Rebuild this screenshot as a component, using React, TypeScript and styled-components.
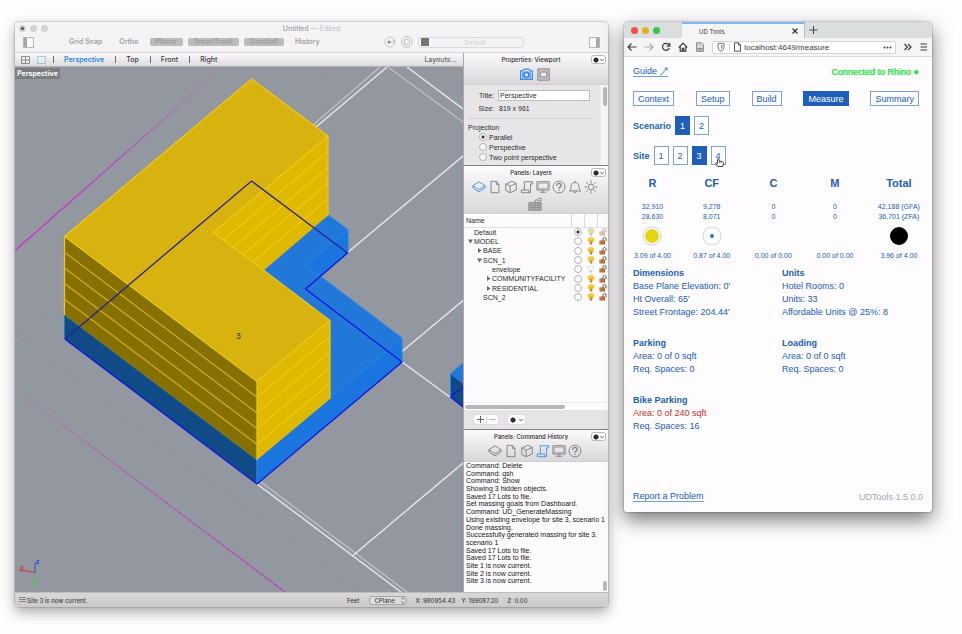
import React from "react";
import styled, { createGlobalStyle, css } from "styled-components";

const sans = '"Liberation Sans", Arial, sans-serif';
const ui = 'Inter, "Liberation Sans", sans-serif';
const blue = "#2160b4";

const GlobalStyle = createGlobalStyle`
  *, *::before, *::after { box-sizing: border-box; }
  body { margin: 0; background: #fefcfe; font-family: ${sans}; }
  button, input, select { font: inherit; color: inherit; margin: 0; padding: 0; }
  table { border-collapse: collapse; border-spacing: 0; }
  ul { list-style: none; margin: 0; padding: 0; }
  h2, h3, p { margin: 0; font-weight: inherit; font-size: inherit; }
  svg { display: block; flex: none; }
`;

const Desktop = styled.div`
  display: grid;
  grid-template-columns: minmax(0, 593fr) minmax(0, 308fr);
  gap: 16px;
  min-height: 100vh;
  padding: 22px 30px 27px 15px;
`;

/* ---------- modelling window ---------- */

const ModelWindow = styled.section`
  display: flex;
  flex-direction: column;
  min-width: 0;
  border-radius: 4px;
  overflow: hidden;
  background: #f5f3f6;
  box-shadow: 0 0 1px 1px rgba(0, 0, 0, 0.14), 0 5px 13px rgba(0, 0, 0, 0.34);
  font-size: 7px;
  color: #2b2b2b;
`;

const ModelHeader = styled.header`
  height: 31px;
  border-bottom: 1px solid #d6d4d7;
  color: #aeacb0;
  font-family: ${ui};
`;

const TitleRow = styled.div`
  display: grid;
  grid-template-columns: 1fr auto 1fr;
  align-items: center;
  height: 12px;
  padding: 0 4px;
`;

const Title = styled.h2`
  color: #949296;
  span { color: #c0bec2; }
`;

const Dots = styled.div`
  display: flex;
  gap: 4px;
`;

const WindowDot = styled.button<{ $color: string; $marked?: boolean }>`
  width: 7px;
  height: 7px;
  border: 0;
  border-radius: 50%;
  background: ${(p) =>
    p.$marked ? "radial-gradient(circle, #555 0 1px, #cfcdd0 2px)" : p.$color};
`;

const Toolbar = styled.div`
  display: flex;
  align-items: center;
  height: 16px;
  padding: 0 8px;
`;

const SnapTools = styled.div`
  display: flex;
  align-items: center;
  margin-left: 36px;
`;

const Tool = styled.button<{ $on?: boolean; $gap?: number }>`
  height: 8px;
  line-height: 8px;
  border: 0;
  border-radius: 2px;
  padding: 0 6px;
  margin-left: ${(p) => p.$gap ?? 5}px;
  font-weight: 600;
  background: ${(p) => (p.$on ? "#bdbbbe" : "transparent")};
  color: ${(p) => (p.$on ? "#9f9da0" : "#a19fa2")};
`;

const RoundTools = styled.div`
  display: flex;
  align-items: center;
  gap: 5px;
  margin-left: auto;
`;

const IconButton = styled.button`
  display: grid;
  place-items: center;
  border: 0;
  background: none;
  color: inherit;
`;

const LayerPicker = styled.button`
  display: grid;
  grid-template-columns: 8px 1fr;
  align-items: center;
  width: 106px;
  height: 11px;
  margin: 0 65px 0 5px;
  padding: 0 2px;
  border: 1px solid #dbd9dc;
  border-radius: 3px;
  background: #f5f3f6;
  color: #d0ced1;
  font-size: 6px;
`;

const Swatch = styled.span`
  width: 8px;
  height: 8px;
  background: #747475;
`;

const ModelBody = styled.div`
  flex: 1;
  display: grid;
  grid-template-columns: minmax(0, 1fr) 145px;
  min-height: 0;
`;

const ViewArea = styled.div`
  display: flex;
  flex-direction: column;
  min-width: 0;
`;

const ViewTabs = styled.nav`
  display: flex;
  align-items: center;
  height: 14px;
  padding: 0 6px 0 6px;
  gap: 7px;
  background: linear-gradient(#fbf9fb, #dddbde);
  border-bottom: 1px solid #b3b1b4;
  font-family: ${ui};
  font-weight: 500;
`;

const ViewTab = styled.button<{ $active?: boolean }>`
  border: 0;
  border-left: 1px solid #6d6c6e;
  height: 7px;
  line-height: 7px;
  padding: 0 4px 0 10px;
  background: none;
  font-weight: ${(p) => (p.$active ? 600 : 500)};
  color: ${(p) => (p.$active ? "#2d86e8" : "#3f3e40")};
`;

const LayoutsButton = styled.button`
  margin-left: auto;
  border: 0;
  background: none;
  color: #68676a;
`;

const Viewport = styled.div`
  position: relative;
  flex: 1;
  min-height: 0;
  background: #9297a0;
`;

const Scene = styled.svg`
  position: absolute;
  inset: 0;
  width: 100%;
  height: 100%;
`;

const ViewLabel = styled.div`
  position: absolute;
  left: 0;
  top: 1px;
  height: 11px;
  line-height: 11px;
  padding: 0 2px;
  background: #7b7d80;
  color: #fff;
  font-family: ${ui};
  font-size: 7px;
  font-weight: 700;
`;

const Sidebar = styled.aside`
  display: flex;
  flex-direction: column;
  min-width: 0;
  border-left: 1px solid #aaa8ab;
  background: #fdfbfd;
`;

const Panel = styled.section<{ $grow?: boolean; $height?: number }>`
  display: flex;
  flex-direction: column;
  ${(p) => (p.$grow ? css`flex: 1;` : css`height: ${p.$height}px; flex: none;`)}
  & + & { border-top: 1px solid #828083; }
`;

const PanelHead = styled.header<{ $height: number }>`
  position: relative;
  height: ${(p) => p.$height}px;
  flex: none;
  background: linear-gradient(#fcfafc, #d9d7da);
  border-bottom: 1px solid #d0ced1;
`;

const PanelTitle = styled.h3`
  height: 13px;
  line-height: 13px;
  padding-right: 10px;
  text-align: center;
  font-family: ${ui};
  font-size: 6px;
  font-weight: 500;
`;

const PanelMenu = styled.button`
  position: absolute;
  top: 2px;
  right: 2px;
  display: flex;
  align-items: center;
  justify-content: center;
  gap: 1px;
  width: 15px;
  height: 9px;
  border: 1px solid #bab8bb;
  border-radius: 3px;
  background: #fff;
`;

const IconRow = styled.div<{ $gap?: number; $top?: number }>`
  display: flex;
  flex-wrap: wrap;
  justify-content: center;
  gap: 3px ${(p) => p.$gap ?? 2}px;
  color: #7b797c;
  padding: ${(p) => p.$top ?? 1}px 6px 0 3px;
`;

const PropertyForm = styled.form`
  flex: 1;
  display: grid;
  grid-template-columns: minmax(0, 1fr) 8px;
  background: #e7e5e8;
`;

const Fields = styled.div`
  padding: 4px 0 0 4px;
`;

const Field = styled.div`
  display: grid;
  grid-template-columns: 26px 92px;
  column-gap: 4px;
  align-items: center;
  height: 13px;
  line-height: 9px;
  label, span { text-align: right; }
  output { padding-left: 1px; }
`;

const TextInput = styled.input`
  width: 100%;
  height: 11px;
  border: 1px solid #bfbdc0;
  background: #fff;
  padding: 0 1px;
`;

const Projection = styled.fieldset`
  margin: 3px 8px 0 0;
  padding: 4px 0 0;
  border: 0;
  border-top: 1px solid #d5d3d6;
  legend { float: left; width: 100%; height: 9px; line-height: 9px; padding: 0; }
`;

const Choice = styled.label`
  clear: both;
  display: flex;
  align-items: center;
  gap: 2px;
  height: 10px;
  padding-left: 11px;
`;

const Radio = styled.input`
  appearance: none;
  display: block;
  width: 8px;
  height: 8px;
  border: 1px solid #b3b1b4;
  border-radius: 50%;
  background: #fff;
  &:checked { background: radial-gradient(circle, #333 0 1px, #fff 2px); }
`;

const Track = styled.div`
  padding: 2px;
  border-left: 1px solid #eceaed;
  background: #f8f6f9;
`;

const Thumb = styled.div<{ $h: number; $w?: number }>`
  width: ${(p) => p.$w ?? 4}px;
  height: ${(p) => p.$h}px;
  border-radius: 2px;
  background: #b9b7ba;
`;

const LayerTable = styled.table`
  width: 100%;
  table-layout: fixed;
  th { height: 13px; padding: 0 0 0 2px; text-align: left; font-weight: 400; border-bottom: 1px solid #e2e0e3; }
  th + th { border-left: 1px solid #dddbde; }
  td { height: 9px; padding: 0; line-height: 9px; }
  td > svg, td > input { margin: 0 auto; }
  tbody tr:nth-child(3n) td { height: 10px; }
`;

const LayerName = styled.div<{ $level: number }>`
  display: grid;
  grid-template-columns: 6px 1fr;
  align-items: center;
  padding-left: ${(p) => 4 + p.$level * 9}px;
  white-space: nowrap;
`;

const HScroll = styled.div`
  margin-top: auto;
  padding: 2px 1px;
  height: 8px;
  border-top: 1px solid #edebee;
`;

const LayerActions = styled.footer`
  display: flex;
  align-items: center;
  gap: 10px;
  height: 19px;
  padding-left: 10px;
  background: #e6e4e7;
`;

const SplitButtons = styled.div`
  display: flex;
  border-radius: 2px;
  background: #fff;
  box-shadow: 0 0 1px #aaa;
`;

const MiniButton = styled.button`
  display: flex;
  align-items: center;
  justify-content: center;
  gap: 3px;
  min-width: 12px;
  height: 9px;
  padding: 0 2px;
  border: 0;
  background: none;
  color: #777;
  & + & { border-left: 1px solid #e2e0e3; }
`;

const HistoryBody = styled.div`
  flex: 1;
  min-height: 0;
  display: grid;
  grid-template-columns: minmax(0, 1fr) 5px;
  grid-template-rows: minmax(0, 1fr);
`;

const HistoryLines = styled.ul`
  display: flex;
  flex-direction: column;
  padding: 0 0 7px 2px;
  color: #161616;
  li { flex: 1; min-height: 0; line-height: 8px; white-space: nowrap; }
`;

const HistoryTrack = styled.div`
  display: flex;
  align-items: flex-end;
  padding-bottom: 1px;
`;

const StatusBar = styled.footer`
  display: grid;
  grid-template-columns: 328px auto auto auto 1fr;
  align-items: center;
  height: 15px;
  padding: 0 4px;
  background: linear-gradient(#d9d7da, #cbc9cc);
  border-top: 1px solid #bdbbbe;
  font-family: ${ui};
  font-size: 6px;
  font-weight: 500;
  color: #403f41;
`;

const StatusText = styled.p`
  display: flex;
  align-items: center;
  gap: 1px;
`;

const PlaneSelect = styled.div`
  position: relative;
  margin: 0 8px 0 10px;
  select {
    display: block;
    appearance: none;
    width: 38px;
    height: 9px;
    padding: 0 4px;
    border: 1px solid #a5a3a6;
    border-radius: 3px;
    background: #dedcdf;
  }
  svg { position: absolute; right: 2px; top: 1px; pointer-events: none; }
`;

const Coords = styled.div`
  display: flex;
  gap: 6px;
  span:last-child { margin-left: 3px; }
`;

/* ---------- browser window ---------- */

const BrowserWindow = styled.section`
  align-self: start;
  min-width: 0;
  border-radius: 4px 4px 3px 3px;
  overflow: hidden;
  background: #fefcfe;
  box-shadow: 0 0 1px 1px rgba(0, 0, 0, 0.14), 0 8px 19px rgba(0, 0, 0, 0.52);
  font-size: 9px;
`;

const TabStrip = styled.header`
  display: flex;
  align-items: center;
  height: 16px;
  padding-left: 7px;
  background: #dcdddf;
  color: #333;
`;

const BrowserTab = styled.div`
  display: flex;
  align-items: center;
  justify-content: space-between;
  width: 123px;
  height: 16px;
  margin-left: 22px;
  padding: 0 6px 0 17px;
  border-top: 2px solid #7db9f5;
  border-right: 1px solid #bbb;
  background: #f5f4f6;
  font-family: ${ui};
  font-size: 6px;
`;

const NavBar = styled.nav`
  display: flex;
  align-items: center;
  justify-content: space-between;
  height: 19px;
  padding: 0 4px 0 3px;
  background: #f5f4f6;
  border-bottom: 1px solid #dcdadd;
  color: #3d3c3f;
`;

const AddressBox = styled.div`
  display: flex;
  align-items: center;
  gap: 2px;
  width: 61%;
  height: 13px;
  padding: 0 3px;
  border: 1px solid #d6d4d7;
  border-radius: 2px;
  background: #fff;
  input {
    flex: 1;
    min-width: 0;
    border: 0;
    background: none;
    font-size: 8px;
    color: #3b3a3d;
  }
`;

const Page = styled.main`
  padding: 8px 9px 0;
  color: ${blue};
`;

const Split = styled.div`
  display: flex;
  align-items: center;
  justify-content: space-between;
  height: 13px;
`;

const PageLink = styled.a`
  display: inline-flex;
  align-items: center;
  gap: 3px;
  line-height: 10px;
  border-bottom: 1px solid #6f9fd6;
  color: inherit;
  text-decoration: none;
`;

const Connection = styled.span`
  padding-right: 4px;
  color: #2fe04c;
  text-shadow: 0 0 1px #2fe04c;
`;

const Steps = styled.nav`
  display: flex;
  justify-content: space-between;
  margin: 13px 4px 0 0;
`;

const OutlineButton = styled.button<{ $on?: boolean; $tall?: boolean }>`
  position: relative;
  height: ${(p) => (p.$tall ? 19 : 15)}px;
  min-width: 15px;
  padding: 0 4px;
  border: 1px solid ${(p) => (p.$on ? blue : "#7aa5da")};
  background: ${(p) => (p.$on ? "#1f5fbb" : "#fefcfe")};
  color: ${(p) => (p.$on ? "#fff" : blue)};
  line-height: 10px;
`;

const OptionRow = styled.div<{ $top: number }>`
  display: flex;
  align-items: center;
  gap: 4px;
  margin-top: ${(p) => p.$top}px;
`;

const Strong = styled.strong`
  font-weight: 700;
`;

const PointerIcon = styled.svg`
  position: absolute;
  left: 3px;
  top: 10px;
  z-index: 1;
`;

const AreaTable = styled.table`
  width: calc(100% + 18px);
  margin: 9px -9px 0;
  table-layout: fixed;
  text-align: center;
  th { height: 18px; padding: 0; font-size: 11px; }
  td { height: 10px; padding: 0; font-size: 7px; line-height: 10px; }
  tbody tr:first-child td { height: 20px; vertical-align: bottom; }
  tbody tr:nth-child(3) td { height: 27px; }
  tbody tr:nth-child(4) td { height: 14px; }
  svg { margin: 0 auto; }
`;

const Facts = styled.div`
  display: grid;
  grid-template-columns: minmax(0, 149fr) minmax(0, 141fr);
  row-gap: 18px;
  margin-top: 4px;
`;

const Fact = styled.section`
  line-height: 13px;
  h3 { font-weight: 700; }
`;

const FactLine = styled.p<{ $alert?: boolean }>`
  color: ${(p) => (p.$alert ? "#cb3128" : "inherit")};
`;

const PageFooter = styled.footer`
  display: flex;
  align-items: center;
  justify-content: space-between;
  margin-top: 54px;
  height: 19px;
  padding-bottom: 6px;
  box-sizing: content-box;
  small { font-size: 9px; color: #a3a8b1; }
`;

/* ---------- icons ---------- */

type IconKind =
  | "layers" | "page" | "cube" | "scroll" | "monitor" | "help" | "bell" | "sun" | "keyboard" | "camera" | "frame";

const glyphs: Record<IconKind, React.ReactNode> = {
  layers: <><path d="M8 2 15 6.500 8 11 1 6.500Z" /><path d="M1 6.500V9L8 13.500 15 9V6.500" /></>,
  page: <path d="M3.500 1.500h6L12.500 5v9.500h-9ZM9.500 1.500V5h3" />,
  cube: <><path d="M2 4.500 9 1.500l5 2.500v7.500l-7 3-5-2.500Z" /><path d="m2 4.500 5 2.500 7-3M7 7v7.500" /></>,
  scroll: <path d="M5 11.500V2h9.500v2.500H12V14.500H1.500V11.500h8.500v3" />,
  monitor: <><rect x="1" y="2" width="14" height="9.500" /><rect x="2.500" y="3.500" width="11" height="6.500" strokeWidth=".7" /><path d="M4.500 14h7M8 11.500V14" /></>,
  help: <><circle cx="8" cy="8" r="6.800" /><path d="M5.500 6.500c0-3.500 5-3.500 5 0C10.500 8.300 8 8 8 10M8 11.300v1.400" strokeWidth="1.400" /></>,
  bell: <><path d="M1.500 12.500C3.500 11 3.500 9.500 3.500 7 3.500 1.500 12.500 1.500 12.500 7c0 2.500 0 4 2 5.500Z" /><path d="M8 2.800V.8M6.300 12.500c0 2.600 3.400 2.600 3.400 0" /></>,
  sun: <><circle cx="8" cy="8" r="3.300" /><path d="M8 .5v3M8 12.500v3M.5 8h3M12.500 8h3M2.700 2.700l2 2M11.300 11.300l2 2M13.300 2.700l-2 2M4.700 11.300l-2 2" /></>,
  keyboard: <><rect x="1" y="6.500" width="14" height="8.500" fill="#b5b3b6" /><path d="M2 9.200h12M2 12h12M4.500 7v8M8 7v8M11.500 7v8" strokeWidth=".6" /><path d="M8 6V3.500h2L12 1.500h3v3h-3L10 3.500" strokeWidth=".9" /></>,
  camera: <><path d="M.8 3.500h2.500L5 1.500h6l1.700 2h2.500v10.500H.8Z" strokeWidth="1.600" /><circle cx="8" cy="8.500" r="3.200" strokeWidth="2.400" /><path d="M3.300 4v9.500M12.700 4v9.500" /></>,
  frame: <><rect x="1" y="1" width="14" height="14" fill="#c3c1c4" /><rect x="4" y="5" width="8" height="6" fill="#eceaed" /></>,
};

function Icon({ kind, size = 12, color }: { kind: IconKind; size?: number; color?: string }) {
  return (
    <svg width={size} height={size} viewBox="0 0 16 16" fill="none" stroke={color ?? "currentColor"} strokeWidth="1" strokeLinejoin="round">
      {glyphs[kind]}
    </svg>
  );
}

function Gear() {
  return (
    <svg width="6" height="6" viewBox="0 0 12 12">
      <circle cx="6" cy="6" r="4.500" fill="#252525" stroke="#252525" strokeWidth="2" strokeDasharray="2 1.500" />
      <circle cx="6" cy="6" r="1" fill="#777" />
    </svg>
  );
}

function Caret() {
  return (
    <svg width="4" height="4" viewBox="0 0 8 8" fill="none" stroke="#444" strokeWidth="2">
      <path d="m1 2.500 3 3 3-3" />
    </svg>
  );
}

function Bulb({ tone }: { tone: "on" | "soft" | "off" }) {
  const fill = tone === "on" ? "#fbd425" : tone === "soft" ? "#e2e6a0" : "#f4f8fd";
  const line = tone === "on" ? "#e3a92f" : tone === "soft" ? "#bcc291" : "#bccbdc";
  return (
    <svg width="8" height="8" viewBox="0 0 16 16">
      <path d="M5 11C-1 5 3 1 8 1s9 4 3 10Z" fill={fill} stroke={line} />
      <path d="M5.500 11h5v3L8 15.500 5.500 14Z" fill={tone === "on" ? "#a9823a" : line} />
      {tone === "on" && <path d="m5.500 6 2.500 4 2.500-4" fill="none" stroke="#e8742a" strokeWidth="1.400" />}
    </svg>
  );
}

function Lock({ soft }: { soft?: boolean }) {
  return (
    <svg width="8" height="8" viewBox="0 0 16 16" opacity={soft ? 0.45 : 1}>
      <path d="M8 8V4c0-4 6-4 6 0v4" fill="none" stroke="#66564b" strokeWidth="2" />
      <rect x="1" y="7" width="11" height="8" fill="#a85b24" />
      <path d="M3 8v6M6 8v6M9 8v6" stroke="#e3a44c" strokeWidth="1.200" />
    </svg>
  );
}

function Arrow({ open }: { open?: boolean }) {
  return (
    <svg width="5" height="5" viewBox="0 0 10 10" fill="#68676a">
      <path d={open ? "M0 1h10L5 9Z" : "M2 0v10l7-5Z"} />
    </svg>
  );
}

function SidePane({ flip }: { flip?: boolean }) {
  return (
    <svg width="11" height="11" viewBox="0 0 11 11">
      <rect x=".5" y=".5" width="10" height="10" fill="#fbf9fb" stroke="#b9b7ba" />
      <rect x={flip ? 7 : 1} y="1" width="3" height="9" fill="#a8a6a9" />
    </svg>
  );
}

/* ---------- 3D scene ---------- */

const floors = [1, 2, 3, 4];
const floorHeight = 15.7;

function Building() {
  return (
    <Scene viewBox="15 67 448 525" preserveAspectRatio="xMidYMid slice" role="img" aria-label="Perspective view of site 3 massing">
      <defs>
        <linearGradient id="fadeTop" gradientUnits="userSpaceOnUse" x1="15" y1="250" x2="223" y2="67">
          <stop offset="0" stopColor="#d81fdc" />
          <stop offset=".45" stopColor="#b648bd" />
          <stop offset=".75" stopColor="#a876ac" />
          <stop offset="1" stopColor="#9c9199" />
        </linearGradient>
        <linearGradient id="fadeLow" gradientUnits="userSpaceOnUse" x1="15" y1="388" x2="285" y2="592">
          <stop offset="0" stopColor="#a08ea4" />
          <stop offset=".45" stopColor="#b656bc" />
          <stop offset="1" stopColor="#c22bd0" />
        </linearGradient>
        <clipPath id="courtFace">
          <path d="M328 136V215.500L263.700 270.500 213.500 232.500Z" />
        </clipPath>
      </defs>

      <g fill="none" stroke="#a09a98" strokeWidth="1">
        <path d="M333 67 288 105M447 67 463 78" />
        <path d="M65 298 38 318Q22 332 36 350L113 410 360 592M15 320 28 330 15 343" />
      </g>
      <path d="M15 250.500 223 67" stroke="url(#fadeTop)" strokeWidth="1.300" />
      <path d="M15 389 285 592" stroke="url(#fadeLow)" strokeWidth="1.200" strokeDasharray="5 1" />
      <g stroke="#c2c0c3" strokeWidth="1.300">
        <path d="M380 67 313 125M388 67 463 122M261 482 407 592" />
      </g>
      <g stroke="#e6e8ef" strokeWidth="1.400">
        <path d="M387 67 316 127M407 67 463 109M463 156 347 253M463 300.500 402 351.500M402 362 450.500 397.500M463 463 353 555.500M257 484 401 592" />
      </g>

      <path d="M328 215 348 229.500V253L321 276.500 402 338V362L257 484V460L200 400 230 250Z" fill="#2278d8" />
      <path d="M348 229.500V253L321 276.500 305.500 265ZM402 338V362L257 484V460Z" fill="#1b75df" />
      <path d="M328 215 348 229.500V253M348 229.500 305.500 265 402 338V362M402 338 330 398" fill="none" stroke="#2386f2" />
      <path d="M64.500 315 257 460V484L64.500 339Z" fill="#104a87" stroke="#2673c8" />

      <path d="M251.500 79 328 136 213.500 232.500 330 320.500 257 381.500 64.500 236.500Z" fill="#d8b310" />
      <path d="M328 136V215.500L263.700 270.500 213.500 232.500Z" fill="#dfb800" />
      <path d="M64.500 236.500 257 381.500V460L64.500 315Z" fill="#857000" />
      <path d="M257 381.500 330 320.500V399L257 460Z" fill="#dfb800" />
      <g fill="none" stroke="#f0c912" strokeWidth="1.200">
        <path d="M251.500 79 328 136 213.500 232.500 330 320.500 257 381.500 64.500 236.500ZM328 136V215M64.500 236.500V315M257 381.500V460M330 320.500V399" />
        <g clipPath="url(#courtFace)">
          {floors.map((f) => (
            <path key={f} d={`M328 ${136 + f * floorHeight}l-114.500 96.500`} />
          ))}
        </g>
        {floors.map((f) => (
          <path key={f} d={`M257 ${381.5 + f * floorHeight}l73-61`} />
        ))}
      </g>
      <g fill="none" stroke="#d6ad12" strokeWidth="1.200">
        {floors.map((f) => (
          <path key={f} d={`M64.500 ${236.5 + f * floorHeight}l192.500 145`} />
        ))}
      </g>
      <path d="M257 460V484" stroke="#2f86e6" />

      <path d="M450.500 374 463 363V384Z" fill="#2278d8" />
      <path d="M450.500 374 463 384V407L450.500 397Z" fill="#104a87" />
      <path d="M463 387 450.500 397 463 407" fill="none" stroke="#1017e0" strokeWidth="1.300" />
      <path d="M450.500 397V374L463 363" fill="none" stroke="#2386f2" />

      <path d="M65 339 251.500 181 347.500 253" fill="none" stroke="#28209a" strokeWidth="1.300" />
      <path d="M347.500 253 305.500 289 402 362 257 484 65 339" fill="none" stroke="#0f16e4" strokeWidth="1.300" />

      <text x="236" y="339" fontFamily={ui} fontSize="8" fill="#2d2768">3</text>
      <g fontFamily={sans} fontSize="7" fontWeight="700">
        <path d="M35 572.500V563h3" fill="none" stroke="#3b46d8" />
        <path d="M35 572.500 19 570" stroke="#d23a33" />
        <path d="M35 573 33.500 582" stroke="#4bc14e" />
        <text x="36" y="564" fill="#3b46d8">z</text>
        <text x="20" y="570" fill="#d23a33">x</text>
        <text x="32" y="585" fill="#3bd044">y</text>
      </g>
    </Scene>
  );
}

/* ---------- data ---------- */

type Layer = { name: string; level: number; arrow?: "open" | "closed"; bulb: "on" | "soft" | "off"; current?: boolean };

const layers: Layer[] = [
  { name: "Default", level: 0, bulb: "soft", current: true },
  { name: "MODEL", level: 0, arrow: "open", bulb: "on" },
  { name: "BASE", level: 1, arrow: "closed", bulb: "on" },
  { name: "SCN_1", level: 1, arrow: "open", bulb: "on" },
  { name: "envelope", level: 2, bulb: "off" },
  { name: "COMMUNITYFACILITY", level: 2, arrow: "closed", bulb: "on" },
  { name: "RESIDENTIAL", level: 2, arrow: "closed", bulb: "on" },
  { name: "SCN_2", level: 1, bulb: "on" },
];

const history = [
  "Command: Delete", "Command: qsh", "Command: Show", "Showing 3 hidden objects.", "Saved 17 Lots to file.",
  "Set massing goals from Dashboard.", "Command: UD_GenerateMassing", "Using existing envelope for site 3, scenario 1",
  "Done massing.", "Successfully generated massing for site 3,", "scenario 1", "Saved 17 Lots to file.",
  "Saved 17 Lots to file.", "Site 1 is now current.", "Site 2 is now current.", "Site 3 is now current.",
];

const facts = [
  { title: "Dimensions", lines: ["Base Plane Elevation: 0'", "Ht Overall: 65'", "Street Frontage: 204.44'"] },
  { title: "Units", lines: ["Hotel Rooms: 0", "Units: 33", "Affordable Units @ 25%: 8"] },
  { title: "Parking", lines: ["Area: 0 of 0 sqft", "Req. Spaces: 0"] },
  { title: "Loading", lines: ["Area: 0 of 0 sqft", "Req. Spaces: 0"] },
  { title: "Bike Parking", lines: ["Area: 0 of 240 sqft", "Req. Spaces: 16"], alert: 0 },
];

const areas = [
  { name: "R", gfa: "32,910", zfa: "28,630", far: "3.09 of 4.00", dot: 7, color: "#e8d414", ring: true },
  { name: "CF", gfa: "9,278", zfa: "8,071", far: "0.87 of 4.00", dot: 2, color: "#1f7fe4", ring: true },
  { name: "C", gfa: "0", zfa: "0", far: "0.00 of 0.00" },
  { name: "M", gfa: "0", zfa: "0", far: "0.00 of 0.00" },
  { name: "Total", gfa: "42,188 (GFA)", zfa: "36,701 (ZFA)", far: "3.96 of 4.00", dot: 9, color: "#000" },
];

function PanelGear({ label }: { label: string }) {
  return <PanelMenu type="button" aria-label={label}><Gear /><Caret /></PanelMenu>;
}

function PanelIcons({ kinds, active, size = 14 }: { kinds: IconKind[]; active: IconKind; size?: number }) {
  return (
    <>
      {kinds.map((k) => (
        <IconButton key={k} type="button" aria-label={k}>
          <Icon kind={k} size={size} color={k === active ? "#3b8ff0" : undefined} />
        </IconButton>
      ))}
    </>
  );
}

function ModelApp() {
  return (
    <ModelWindow>
      <ModelHeader>
        <TitleRow>
          <Dots>
            <WindowDot $color="#cfcdd0" $marked aria-label="Close" />
            <WindowDot $color="#d3d1d4" aria-label="Minimize" />
            <WindowDot $color="#d3d1d4" aria-label="Zoom" />
          </Dots>
          <Title>Untitled <span>— Edited</span></Title>
        </TitleRow>
        <Toolbar>
          <IconButton aria-label="Left sidebar"><SidePane /></IconButton>
          <SnapTools>
            <Tool $gap={-7}>Grid Snap</Tool>
            <Tool>Ortho</Tool>
            <Tool $on>Planar</Tool>
            <Tool $on>SmartTrack</Tool>
            <Tool $on>Gumball</Tool>
            <Tool>History</Tool>
          </SnapTools>
          <RoundTools>
            <IconButton aria-label="Filter">
              <svg width="12" height="12" viewBox="0 0 12 12" fill="none" stroke="#c6c4c7"><circle cx="6" cy="6" r="5" /><path d="M4 6h7M9 4l2 2-2 2" /><circle cx="5" cy="6" r="1.500" fill="#8b898c" stroke="none" /></svg>
            </IconButton>
            <IconButton aria-label="Record">
              <svg width="12" height="12" viewBox="0 0 12 12" fill="none" stroke="#c0bec1"><circle cx="6" cy="6" r="5.300" /><circle cx="6" cy="6" r="2.800" /></svg>
            </IconButton>
          </RoundTools>
          <LayerPicker><Swatch /><span>Default</span></LayerPicker>
          <IconButton aria-label="Right sidebar"><SidePane flip /></IconButton>
        </Toolbar>
      </ModelHeader>

      <ModelBody>
        <ViewArea>
          <ViewTabs>
            <IconButton aria-label="Four views">
              <svg width="9" height="8" viewBox="0 0 9 8" fill="none" stroke="#908e91"><path d="M.5.5h8v7h-8ZM4.500 0v8M0 4h9" /></svg>
            </IconButton>
            <IconButton aria-label="Single view">
              <svg width="9" height="8" viewBox="0 0 9 8" fill="none" stroke="#7fb4ee"><rect x=".5" y=".5" width="8" height="7" strokeDasharray="2 1" /></svg>
            </IconButton>
            <ViewTab $active>Perspective</ViewTab>
            <ViewTab>Top</ViewTab>
            <ViewTab>Front</ViewTab>
            <ViewTab>Right</ViewTab>
            <LayoutsButton>Layouts...</LayoutsButton>
          </ViewTabs>
          <Viewport>
            <Building />
            <ViewLabel>Perspective</ViewLabel>
          </Viewport>
        </ViewArea>

        <Sidebar>
          <Panel $height={112}>
            <PanelHead $height={32}>
              <PanelTitle>Properties: Viewport</PanelTitle>
              <PanelGear label="Properties options" />
              <IconRow $gap={4} $top={2}>
                <PanelIcons kinds={["camera", "frame"]} active="camera" size={13} />
              </IconRow>
            </PanelHead>
            <PropertyForm>
              <Fields>
                <Field>
                  <label htmlFor="view-title">Title:</label>
                  <TextInput id="view-title" defaultValue="Perspective" />
                </Field>
                <Field>
                  <span>Size:</span>
                  <output>819 x 961</output>
                </Field>
                <Projection>
                  <legend>Projection</legend>
                  {["Parallel", "Perspective", "Two point perspective"].map((name, i) => (
                    <Choice key={name}>
                      <Radio type="radio" name="projection" defaultChecked={i === 0} />
                      {name}
                    </Choice>
                  ))}
                </Projection>
              </Fields>
              <Track><Thumb $h={19} /></Track>
            </PropertyForm>
          </Panel>

          <Panel $grow>
            <PanelHead $height={48}>
              <PanelTitle>Panels: Layers</PanelTitle>
              <PanelGear label="Layers options" />
              <IconRow>
                <PanelIcons kinds={["layers", "page", "cube", "scroll", "monitor", "help", "bell", "sun", "keyboard"]} active="layers" />
              </IconRow>
            </PanelHead>
            <LayerTable>
              <colgroup>
                <col />
                <col width="13" />
                <col width="13" />
                <col width="11" />
              </colgroup>
              <thead>
                <tr><th>Name</th><th aria-label="Current" /><th aria-label="Visible" /><th aria-label="Locked" /></tr>
              </thead>
              <tbody>
                {layers.map((l) => (
                  <tr key={l.name}>
                    <td>
                      <LayerName $level={l.level}>
                        {l.arrow ? <Arrow open={l.arrow === "open"} /> : <i />}
                        <span>{l.name}</span>
                      </LayerName>
                    </td>
                    <td><Radio type="radio" name="current-layer" aria-label={l.name} defaultChecked={l.current} /></td>
                    <td><Bulb tone={l.bulb} /></td>
                    <td><Lock soft={l.current} /></td>
                  </tr>
                ))}
              </tbody>
            </LayerTable>
            <HScroll><Thumb $h={4} $w={100} /></HScroll>
            <LayerActions>
              <SplitButtons>
                <MiniButton aria-label="Add layer"><svg width="7" height="7" viewBox="0 0 7 7" stroke="#666"><path d="M3.500 0v7M0 3.500h7" /></svg></MiniButton>
                <MiniButton aria-label="Remove layer"><svg width="7" height="7" viewBox="0 0 7 7" stroke="#bbb"><path d="M0 3.500h7" /></svg></MiniButton>
              </SplitButtons>
              <SplitButtons>
                <MiniButton aria-label="Layer actions"><Gear /><Caret /></MiniButton>
              </SplitButtons>
            </LayerActions>
          </Panel>

          <Panel $height={163}>
            <PanelHead $height={32}>
              <PanelTitle>Panels: Command History</PanelTitle>
              <PanelGear label="History options" />
              <IconRow>
                <PanelIcons kinds={["layers", "page", "cube", "scroll", "monitor", "help"]} active="scroll" />
              </IconRow>
            </PanelHead>
            <HistoryBody>
              <HistoryLines>
                {history.map((line, i) => <li key={i}>{line}</li>)}
              </HistoryLines>
              <HistoryTrack><Thumb $h={10} /></HistoryTrack>
            </HistoryBody>
          </Panel>
        </Sidebar>
      </ModelBody>

      <StatusBar>
        <StatusText>
          <svg width="7" height="6" viewBox="0 0 7 6" stroke="#848285"><path d="M0 .5h7M0 2.500h7M0 4.500h7" /></svg>
          Site 3 is now current.
        </StatusText>
        <label htmlFor="plane">Feet</label>
        <PlaneSelect>
          <select id="plane"><option>CPlane</option></select>
          <svg width="4" height="7" viewBox="0 0 4 7" fill="none" stroke="#777"><path d="m.5 2.500 1.500-2 1.500 2M.5 4.500l1.500 2 1.500-2" /></svg>
        </PlaneSelect>
        <Coords>
          <span>X: 980954.43</span>
          <span>Y: 199087.20</span>
          <span>Z: 0.00</span>
        </Coords>
      </StatusBar>
    </ModelWindow>
  );
}

function NavGlyph({ label, d, width = 10 }: { label: string; d: string; width?: number }) {
  return (
    <IconButton aria-label={label}>
      <svg width={width} height="10" viewBox={`0 0 ${width} 10`} fill="none" stroke="currentColor" strokeWidth="1.200"><path d={d} /></svg>
    </IconButton>
  );
}

function BrowserApp() {
  return (
    <BrowserWindow>
      <TabStrip>
        <Dots>
          <WindowDot $color="#f0504b" aria-label="Close" />
          <WindowDot $color="#e2b01d" aria-label="Minimize" />
          <WindowDot $color="#34c84a" aria-label="Zoom" />
        </Dots>
        <BrowserTab>
          <span>UD Tools</span>
          <IconButton aria-label="Close tab">
            <svg width="6" height="6" viewBox="0 0 6 6" stroke="#333" strokeWidth="1.200"><path d="m.5.5 5 5M5.500.5l-5 5" /></svg>
          </IconButton>
        </BrowserTab>
        <IconButton aria-label="New tab">
          <svg width="16" height="8" viewBox="0 0 16 8" stroke="#444"><path d="M8.500 0v8M4.500 4h8" /></svg>
        </IconButton>
      </TabStrip>
      <NavBar>
        <NavGlyph label="Back" d="M9.500 5H1M4.500 1.500 1 5l3.500 3.500" />
        <IconButton aria-label="Forward">
          <svg width="10" height="10" viewBox="0 0 10 10" fill="none" stroke="#aaa8ab" strokeWidth="1.200"><path d="M.5 5H9M5.500 1.500 9 5 5.500 8.500" /></svg>
        </IconButton>
        <NavGlyph label="Reload" d="M8 3A3.500 3.500 0 1 0 8.300 6M8.800.8v3.400H5.500" />
        <NavGlyph label="Home" d="M.8 5.500 5 1.200l4.200 4.300M2.200 4.800v4.400h5.600V4.800M4.300 9V6.300h1.400V9" />
        <IconButton aria-label="Reader">
          <svg width="10" height="10" viewBox="0 0 10 10" fill="#d5d3d6" stroke="#8b898c"><path d="M1.500.8h5l2 2v6.500h-7ZM2.500 6.500h5M2.500 8h5" /></svg>
        </IconButton>
        <AddressBox>
          <svg width="10" height="10" viewBox="0 0 10 10" fill="none" stroke="#777"><path d="M2 1.300h6v3.500Q8 8 5 9.200 2 8 2 4.800Z" /><path d="M5 3v4.500Q6.500 6.500 6.500 3Z" fill="#888" stroke="none" /></svg>
          <svg width="3" height="9" viewBox="0 0 3 9" stroke="#ddd"><path d="M1.500 0v9" /></svg>
          <svg width="9" height="10" viewBox="0 0 9 10" fill="none" stroke="#555"><path d="M1.500.8h4l2 2.200v6.200h-6ZM5.500.8V3h2" /></svg>
          <input aria-label="Address" defaultValue="localhost:4649/measure" />
          <svg width="9" height="3" viewBox="0 0 9 3" fill="#444"><circle cx="1.500" cy="1.500" r="1" /><circle cx="4.500" cy="1.500" r="1" /><circle cx="7.500" cy="1.500" r="1" /></svg>
        </AddressBox>
        <NavGlyph label="More tools" d="m1.500 2 3 3-3 3M5 2l3 3-3 3" />
        <NavGlyph label="Menu" width={8} d="M.5 2h6.500M.5 5h6.500M.5 8h6.500" />
      </NavBar>

      <Page>
        <Split>
          <PageLink href="#guide">
            Guide
            <svg width="8" height="9" viewBox="0 0 8 9" fill="none" stroke={blue} strokeWidth=".8"><path d="M.5 8.500 7 1M4.500 1H7v2.500" /></svg>
          </PageLink>
          <Connection>Connected to Rhino ●</Connection>
        </Split>
        <Steps>
          {["Context", "Setup", "Build", "Measure", "Summary"].map((s) => (
            <OutlineButton key={s} $on={s === "Measure"}>{s}</OutlineButton>
          ))}
        </Steps>
        <OptionRow $top={10}>
          <Strong>Scenario</Strong>
          <OutlineButton $tall $on>1</OutlineButton>
          <OutlineButton $tall>2</OutlineButton>
        </OptionRow>
        <OptionRow $top={11}>
          <Strong>Site</Strong>
          <OutlineButton $tall>1</OutlineButton>
          <OutlineButton $tall>2</OutlineButton>
          <OutlineButton $tall $on>3</OutlineButton>
          <OutlineButton $tall>
            4
            <PointerIcon width="9" height="10" viewBox="0 0 9 10">
              <path d="M2.500 5V2.300q.8-1 1.500 0V4l3.500.5 1 1-.7 4h-5L.6 6.200q.6-1 1.900.3Z" fill="#fff" stroke="#333" strokeWidth=".9" />
              <path d="M4.500 4v2M6 4.300v2" stroke="#555" strokeWidth=".7" />
            </PointerIcon>
          </OutlineButton>
        </OptionRow>

        <AreaTable>
          <colgroup>
            <col width="18.5%" />
            <col width="20%" />
            <col width="20%" />
            <col width="20%" />
            <col />
          </colgroup>
          <thead>
            <tr>{areas.map((a) => <th key={a.name}>{a.name}</th>)}</tr>
          </thead>
          <tbody>
            <tr>{areas.map((a) => <td key={a.name}>{a.gfa}</td>)}</tr>
            <tr>{areas.map((a) => <td key={a.name}>{a.zfa}</td>)}</tr>
            <tr>
              {areas.map((a) => (
                <td key={a.name}>
                  {a.dot && (
                    <svg width="20" height="20" viewBox="0 0 20 20">
                      {a.ring && <circle cx="10" cy="10" r="9" fill="#fff" stroke="#d4d2d5" />}
                      <circle cx="10" cy="10" r={a.dot} fill={a.color} />
                    </svg>
                  )}
                </td>
              ))}
            </tr>
            <tr>{areas.map((a) => <td key={a.name}>{a.far}</td>)}</tr>
          </tbody>
        </AreaTable>

        <Facts>
          {facts.map((f) => (
            <Fact key={f.title}>
              <h3>{f.title}</h3>
              {f.lines.map((line, i) => <FactLine key={line} $alert={f.alert === i}>{line}</FactLine>)}
            </Fact>
          ))}
        </Facts>

        <PageFooter>
          <PageLink href="#report">Report a Problem</PageLink>
          <small>UDTools 1.5.0.0</small>
        </PageFooter>
      </Page>
    </BrowserWindow>
  );
}

export default function App() {
  return (
    <>
      <GlobalStyle />
      <Desktop>
        <ModelApp />
        <BrowserApp />
      </Desktop>
    </>
  );
}
